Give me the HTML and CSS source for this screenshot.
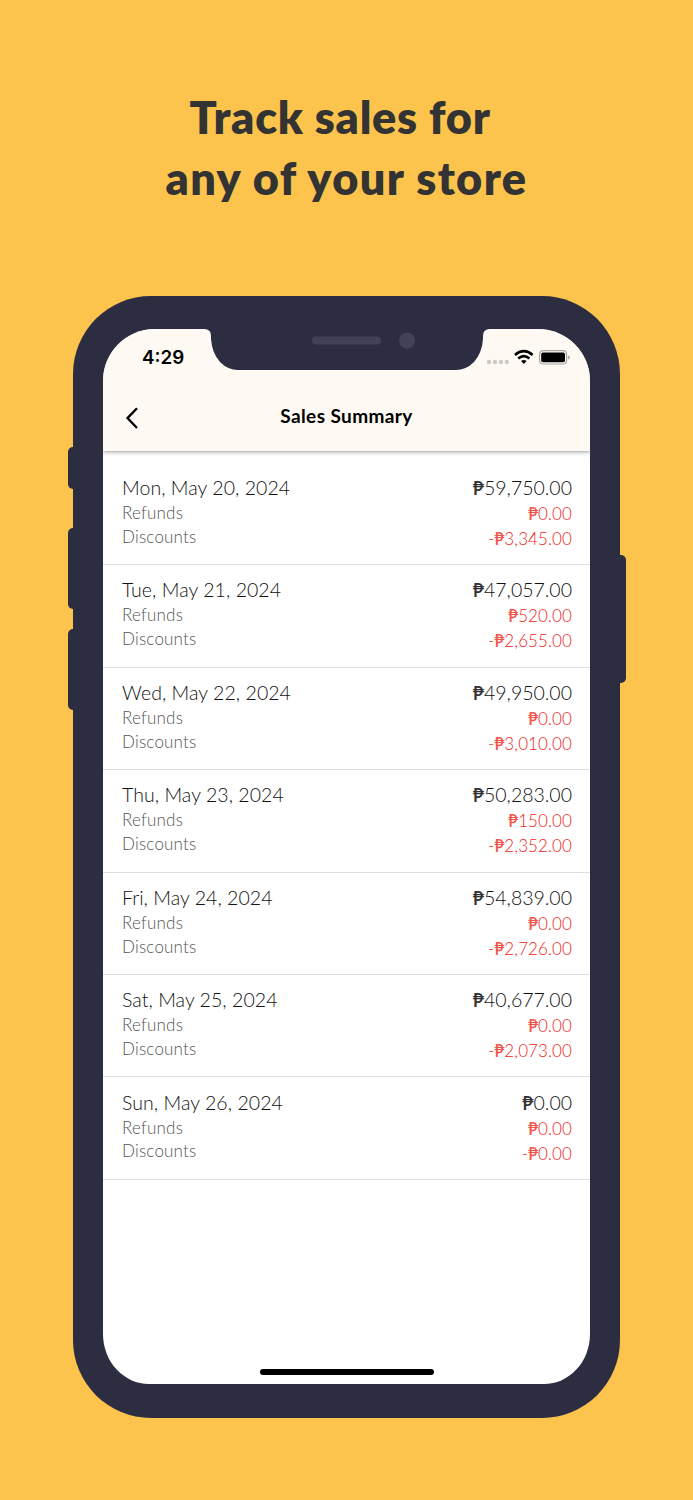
FILE: index.html
```
<!DOCTYPE html>
<html lang="en">
<head>
<meta charset="utf-8">
<title>Sales Summary</title>
<link rel="stylesheet" href="styles.css">
</head>
<body>
<h1 class="headline"><span class="headline-first">Track sales for</span><span class="headline-second">any of your store</span></h1>
<main class="phone">
  <i class="side-button mute"></i><i class="side-button volume-up"></i><i class="side-button volume-down"></i><i class="side-button power"></i>
  <div class="screen">
    <svg class="notch" width="289" height="43" viewBox="0 0 289 43">
      <path fill="#2d2d41" d="M0-2V0H2Q8 .5 8 7V10Q9 24 17 33Q25 41 35 41H253Q263 41 271 33Q279 24 280 10V7Q280 .5 286 0H289V-2Z"/>
      <rect x="109" y="7.5" width="69" height="8" rx="4" fill="#424257"/>
      <circle cx="204" cy="11.5" r="8" fill="#424257"/>
    </svg>
    <header class="top">
      <div class="status">
        <span class="clock">4:29</span>
        <svg class="indicators" width="86" height="18" viewBox="0 0 86 18">
          <g fill="#cfcac3"><circle cx="4" cy="13" r="2.2"/><circle cx="10" cy="13" r="2.2"/><circle cx="16" cy="13" r="2.2"/><circle cx="21.800" cy="13" r="2.200"/></g>
          <g transform="translate(1 0)"><g fill="none" stroke="#000" stroke-width="2.7"><path d="M29 6Q37.800-1.600 46.600 6"/><path d="M32.200 9.500Q37.800 4.900 43.400 9.500"/></g>
          <path d="M35 12Q37.800 9.900 40.600 12L37.800 14.900Z"/></g>
          <g transform="translate(.9 0)"><rect x="53.700" y="1.700" width="27" height="13.300" rx="3.500" fill="none" stroke="#aaa69f" stroke-width="1.200"/>
          <rect x="55.300" y="3.400" width="23.800" height="9.900" rx="1.800"/>
          <path fill="#aaa69f" d="M82.300 6.300Q84 7 84 8.400T82.300 10.500Z"/></g>
        </svg>
      </div>
      <nav class="navbar">
        <svg class="back" width="14" height="24" viewBox="0 0 14 24"><path d="M12 2.300L2.500 12.100L12 22" fill="none" stroke="#000" stroke-width="2.300"/></svg>
        <h2 class="page-title">Sales Summary</h2>
      </nav>
    </header>
    <section class="days">
      <article class="day"><div class="labels"><b>Mon, May 20, 2024</b><span>Refunds</span><span>Discounts</span></div><div class="amounts"><b><i>₱</i>59,750.00</b><span><i>₱</i>0.00</span><span>-<i>₱</i>3,345.00</span></div></article>
      <article class="day"><div class="labels"><b>Tue, May 21, 2024</b><span>Refunds</span><span>Discounts</span></div><div class="amounts"><b><i>₱</i>47,057.00</b><span><i>₱</i>520.00</span><span>-<i>₱</i>2,655.00</span></div></article>
      <article class="day"><div class="labels"><b>Wed, May 22, 2024</b><span>Refunds</span><span>Discounts</span></div><div class="amounts"><b><i>₱</i>49,950.00</b><span><i>₱</i>0.00</span><span>-<i>₱</i>3,010.00</span></div></article>
      <article class="day"><div class="labels"><b>Thu, May 23, 2024</b><span>Refunds</span><span>Discounts</span></div><div class="amounts"><b><i>₱</i>50,283.00</b><span><i>₱</i>150.00</span><span>-<i>₱</i>2,352.00</span></div></article>
      <article class="day"><div class="labels"><b>Fri, May 24, 2024</b><span>Refunds</span><span>Discounts</span></div><div class="amounts"><b><i>₱</i>54,839.00</b><span><i>₱</i>0.00</span><span>-<i>₱</i>2,726.00</span></div></article>
      <article class="day"><div class="labels"><b>Sat, May 25, 2024</b><span>Refunds</span><span>Discounts</span></div><div class="amounts"><b><i>₱</i>40,677.00</b><span><i>₱</i>0.00</span><span>-<i>₱</i>2,073.00</span></div></article>
      <article class="day"><div class="labels"><b>Sun, May 26, 2024</b><span>Refunds</span><span>Discounts</span></div><div class="amounts"><b><i>₱</i>0.00</b><span><i>₱</i>0.00</span><span>-<i>₱</i>0.00</span></div></article>
    </section>
    <div class="home-indicator"></div>
  </div>
</main>
</body>
</html>
```
FILE: styles.css
```
* { box-sizing: border-box; }
body { margin: 0; height: 1500px; background: #fcc44d; font-family: Lato, "Open Sans", sans-serif; overflow: hidden; }
.headline { margin: 0; height: 296px; padding-top: 87px; display: flex; flex-direction: column; align-items: center; font-size: 45px; line-height: 61px; font-weight: 800; color: #333; white-space: nowrap; }
.headline-first { padding-right: 13px; letter-spacing: 0.750px; }
.headline-second { letter-spacing: 1.400px; }
.phone { position: relative; width: 547px; height: 1121.500px; margin-left: 73px; padding: 33px 30px; border-radius: 78px; background: #2d2d41; }
.side-button { position: absolute; left: -5.500px; width: 12px; border-radius: 5px; background: #2d2d41; }
.mute { top: 151px; height: 42px; }
.volume-up { top: 231.500px; height: 81px; }
.volume-down { top: 333px; height: 81px; }
.power { left: auto; right: -5.500px; top: 259px; height: 128px; }
.screen { position: relative; display: flex; flex-direction: column; height: 1055px; border-radius: 52px 52px 46px 46px / 52px 52px 50px 50px; background: #fff; overflow: hidden; }
.notch { position: absolute; top: 0; left: 99.500px; z-index: 2; }
.top { height: 122px; background: #fef9f2; box-shadow: 0 1px 4px rgba(0,0,0,.4); }
.status { display: flex; justify-content: space-between; height: 57px; padding: 17px 19px 0 39px; }
.clock { font: 600 18.800px/24px Inter, sans-serif; color: #000; }
.indicators { margin-top: 3px; }
.navbar { display: grid; grid-template-columns: 14px 1fr 14px; align-items: center; height: 62px; padding: 0 22px; }
.back { margin-top: 1px; }
.page-title { margin: -2px 0 0; text-align: center; font-size: 19px; line-height: 24px; font-weight: 700; letter-spacing: 0.4px; color: #000; }
.days { padding-top: 11.800px; }
.day { display: flex; justify-content: space-between; height: 102.450px; padding: 12.200px 18px 0 19px; border-bottom: 1.500px solid #e0e0e2; }
.labels, .amounts { display: flex; flex-direction: column; }
.amounts { align-items: flex-end; }
.day b { font-size: 19.500px; line-height: 26px; font-weight: 300; color: #111; }
.labels b { letter-spacing: 0.060px; }
.amounts b { letter-spacing: 0; }
.labels span { font-size: 17px; line-height: 23.800px; font-weight: 300; color: #555; letter-spacing: 0.200px; }
.amounts span { font-size: 17px; line-height: 25px; font-weight: 300; color: #f0251a; letter-spacing: 0.100px; }
.day i { font-style: normal; font-weight: 600; letter-spacing: 0; }
.day b i { color: #333; }
.amounts span i { color: #f4554b; }
.home-indicator { width: 174px; height: 6px; margin: auto auto 9.500px; border-radius: 3px; background: #000; }
```
